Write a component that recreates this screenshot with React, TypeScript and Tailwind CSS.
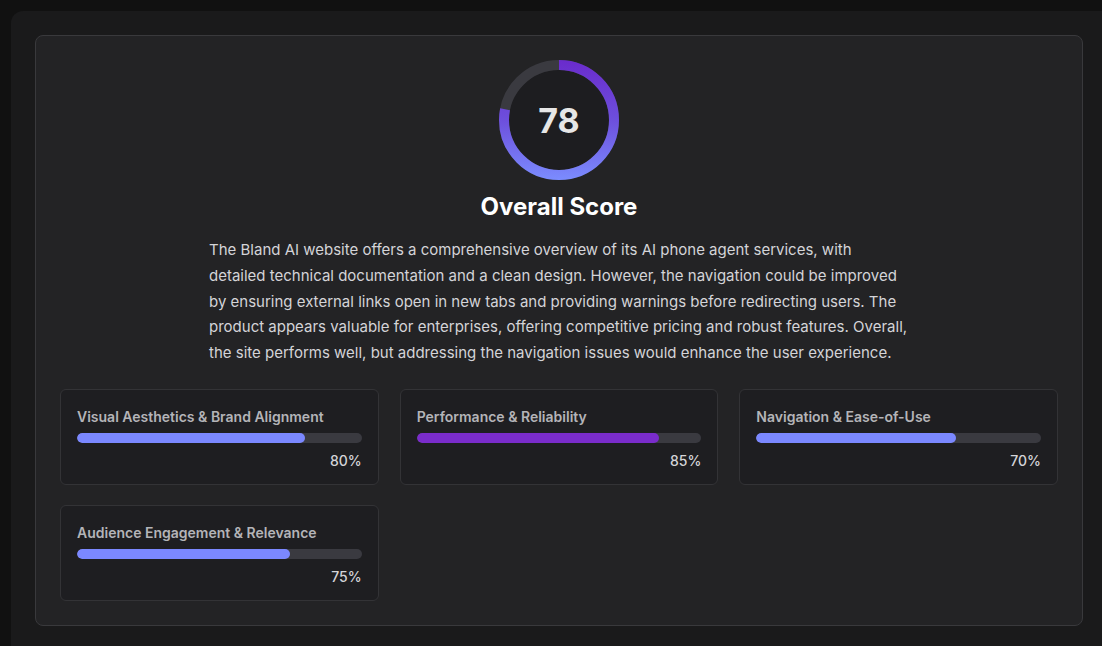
import React from "react";

const metrics = [
  { label: "Visual Aesthetics & Brand Alignment", value: 80, color: "bg-[#7b88ff]" },
  { label: "Performance & Reliability", value: 85, color: "bg-[#7a2ccb]" },
  { label: "Navigation & Ease-of-Use", value: 70, color: "bg-[#7b88ff]" },
  { label: "Audience Engagement & Relevance", value: 75, color: "bg-[#7b88ff]" },
];

function Ring({ score }: { score: number }) {
  const r = 55;
  const c = 2 * Math.PI * r;
  return (
    <div className="relative w-[120px] h-[120px]">
      <svg width="120" height="120" viewBox="0 0 120 120">
        <defs>
          <linearGradient id="g" gradientUnits="userSpaceOnUse" x1="120" y1="60" x2="0" y2="60">
            <stop offset="0" stopColor="#6a2bcc" />
            <stop offset="0.5" stopColor="#6d4fdc" />
            <stop offset="1" stopColor="#7b8cff" />
          </linearGradient>
        </defs>
        <circle cx="60" cy="60" r="50" fill="#1d1d20" />
        <circle cx="60" cy="60" r={r} fill="none" stroke="#3a3a40" strokeWidth="10" />
        <circle
          cx="60"
          cy="60"
          r={r}
          fill="none"
          stroke="url(#g)"
          strokeWidth="10"
          strokeDasharray={`${(c * score) / 100} ${c}`}
          transform="rotate(-90 60 60)"
        />
      </svg>
      <div className="absolute inset-0 flex items-center justify-center text-[34px] font-bold text-[#e6e6e6]">
        {score}
      </div>
    </div>
  );
}

export default function App() {
  return (
    <div className="min-h-[646px] bg-[#111111] pt-[11px] pl-[11px] overflow-hidden" style={{ fontFamily: "Inter, 'Noto Sans', sans-serif" }}>
      <div className="w-[1110px] bg-[#1a1a1b] rounded-tl-[12px] pt-[24px] pl-[24px] pb-[20px]">
        <div className="w-[1048px] bg-[#232325] border border-[#39393c] rounded-[8px] pt-[24px] px-[24px] pb-[24px]">
          <div className="flex flex-col items-center">
            <Ring score={78} />
            <h2 className="mt-[11px] text-[24px] leading-[32px] font-bold text-white">Overall Score</h2>
            <p className="mt-[14px] w-[700px] text-[15px] leading-[25.8px] text-[#d4d4d8]">
              The Bland AI website offers a comprehensive overview of its AI phone agent services, with detailed technical documentation and a clean design. However, the navigation could be improved by ensuring external links open in new tabs and providing warnings before redirecting users. The product appears valuable for enterprises, offering competitive pricing and robust features. Overall, the site performs well, but addressing the navigation issues would enhance the user experience.
            </p>
          </div>
          <div className="mt-[23px] grid grid-cols-3 gap-x-[21px] gap-y-[20px]">
            {metrics.map((m) => (
              <div key={m.label} className="h-[96px] bg-[#1e1e21] border border-[#333336] rounded-[6px] px-[16px] pt-[17px]">
                <div className="text-[14px] leading-[20px] font-semibold text-[#b4b4b8]">{m.label}</div>
                <div className="mt-[6px] h-[10px] rounded-full bg-[#3a3a40] overflow-hidden">
                  <div className={`h-full rounded-full ${m.color}`} style={{ width: `${m.value}%` }} />
                </div>
                <div className="mt-[8px] text-right text-[14px] leading-[20px] font-medium text-[#d4d4d8]">{m.value}%</div>
              </div>
            ))}
          </div>
        </div>
      </div>
    </div>
  );
}
